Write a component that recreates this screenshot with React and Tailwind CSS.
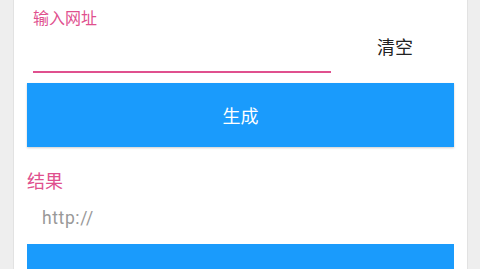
import { useState } from "react";

const cjk = { fontFamily: '"Noto Sans CJK SC", "Noto Sans", sans-serif' };

export default function App() {
  const [url, setUrl] = useState("");

  return (
    <div className="h-[269px] overflow-hidden bg-[#eeeeee] pl-[13px] pr-[12px]" style={cjk}>
      <div className="h-full bg-white border-x border-[#e2e2e2] px-[13px]">
        <div className="pt-[8px] ml-[6px] text-[16px] leading-[18px] text-[#e0508e]">输入网址</div>
        <div className="flex h-[47px]">
          <input
            value={url}
            onChange={e => setUrl(e.target.value)}
            className="ml-[6px] w-[298px] h-full border-b-2 border-[#e0508e] outline-none bg-transparent text-[17px]"
          />
          <button className="flex-1 self-start mt-[10px] pl-[5px] text-[18px] leading-[20px] text-[#222]">清空</button>
        </div>
        <button className="mt-[10px] w-full h-[64px] bg-[#1a9bfc] text-white text-[18px] shadow-[0_1px_2px_rgba(0,0,0,0.2)]">
          生成
        </button>
        <div className="mt-[23px] text-[18px] leading-[20px] text-[#e0508e]">结果</div>
        <div
          className="mt-[18px] ml-[15px] text-[17.5px] leading-[20px] tracking-[0.6px] text-[#999999]"
          style={{ fontFamily: 'Roboto, "Liberation Sans", sans-serif' }}
        >
          http://
        </div>
        <div className="mt-[16px] w-full h-[40px] bg-[#1a9bfc]" />
      </div>
    </div>
  );
}
